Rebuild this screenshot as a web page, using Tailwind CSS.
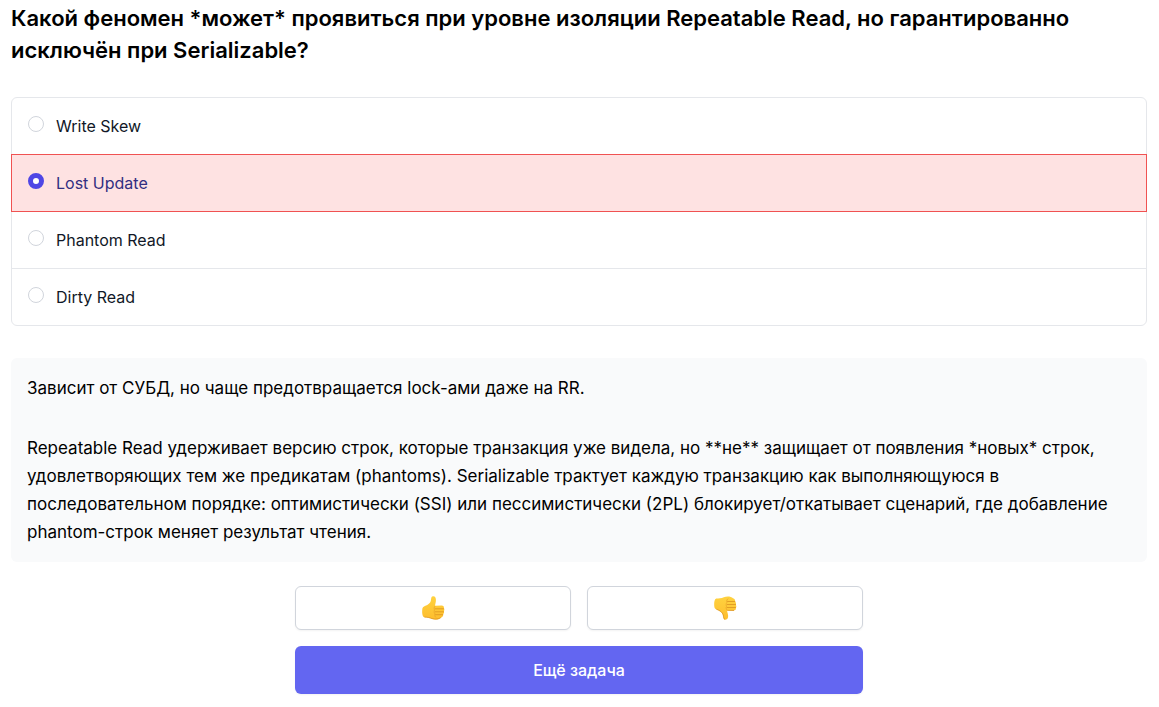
<!DOCTYPE html>
<html lang="ru">
<head>
  <meta charset="UTF-8">
  <title>Repeatable Read и Serializable</title>
  <meta name="viewport" content="width=device-width, initial-scale=1.0">
  <script src="https://cdn.jsdelivr.net/npm/@tailwindcss/browser@4"></script>
</head>
<body class="bg-white font-['Inter','Liberation_Sans',sans-serif] text-black antialiased">

  <main class="pt-0.5 pr-3 pb-3 pl-[11px]">
    <form>
      <fieldset>
        <legend class="text-[22px] leading-8 font-semibold">Какой феномен *может* проявиться при уровне изоляции Repeatable Read, но гарантированно исключён при Serializable?</legend>

        <!-- Answers -->
        <div class="mt-[31px] -space-y-px rounded-md text-base text-[#111827]">
          <label class="relative flex items-start gap-3 rounded-t-md border border-gray-200 p-4">
            <input type="radio" name="answer" value="write-skew" class="mt-0.5 size-4 shrink-0 appearance-none rounded-full border border-gray-300 bg-white checked:border-[5px] checked:border-[#4f46e5]">
            <span>Write Skew</span>
          </label>
          <label class="relative z-10 flex items-start gap-3 border border-[#f05252] bg-[#fee2e2] p-4 text-[#312e81]">
            <input type="radio" name="answer" value="lost-update" checked class="mt-0.5 size-4 shrink-0 appearance-none rounded-full border border-gray-300 bg-white checked:border-[5px] checked:border-[#4f46e5]">
            <span>Lost Update</span>
          </label>
          <label class="relative flex items-start gap-3 border border-gray-200 p-4">
            <input type="radio" name="answer" value="phantom-read" class="mt-0.5 size-4 shrink-0 appearance-none rounded-full border border-gray-300 bg-white checked:border-[5px] checked:border-[#4f46e5]">
            <span>Phantom Read</span>
          </label>
          <label class="relative flex items-start gap-3 rounded-b-md border border-gray-200 p-4">
            <input type="radio" name="answer" value="dirty-read" class="mt-0.5 size-4 shrink-0 appearance-none rounded-full border border-gray-300 bg-white checked:border-[5px] checked:border-[#4f46e5]">
            <span>Dirty Read</span>
          </label>
        </div>
      </fieldset>
    </form>

    <!-- Explanation -->
    <section class="mt-8 space-y-8 rounded-md bg-gray-50 p-4 text-[17px] leading-7">
      <p>Зависит от СУБД, но чаще предотвращается lock-ами даже на RR.</p>
      <p>Repeatable Read удерживает версию строк, которые транзакция уже видела, но **не** защищает от появления *новых* строк, удовлетворяющих тем же предикатам (phantoms). Serializable трактует каждую транзакцию как выполняющуюся в последовательном порядке: оптимистически (SSI) или пессимистически (2PL) блокирует/откатывает сценарий, где добавление phantom-строк меняет результат чтения.</p>
    </section>

    <!-- Feedback -->
    <div class="mx-auto mt-6 grid w-1/2 grid-cols-2 gap-4">
      <button type="button" aria-label="Нравится" class="flex h-11 items-center justify-center rounded-md border border-gray-300 bg-white shadow-xs">
        <svg class="size-6" viewBox="0 0 24 24" fill="none">
          <defs>
            <linearGradient id="thumb" x1="0" y1="0" x2="0" y2="1">
              <stop offset="0" stop-color="#ffd23f"/>
              <stop offset="1" stop-color="#fdbd2e"/>
            </linearGradient>
          </defs>
          <path d="M1.2 14.2C1.2 11.6 2.300 10.600 4.400 9.800C7 8.800 9.300 7.200 9.800 5C10.200 3 10 .4 11.900 .2C14.200 0 15.200 2.200 14.900 4.700C14.700 6.800 14.200 8.200 14 9.800L20.600 9.500C22.400 9.500 23.200 10.600 22.900 12C23.500 13 23.500 14.300 22.900 15.100C23.300 16.400 23 17.600 22.100 18.300C22.400 19.800 21.700 21 20 21.700C18.200 23.700 14 24 10.800 22.800C8.200 21.600 5.700 21.400 3.300 21.300C1.500 20.800 1 17.500 1.200 14.200Z" fill="url(#thumb)"/>
          <path d="M14.200 12.800H22.500M14.200 15.800H22.500M14.500 18.700H21.800" stroke="#e09a22" stroke-width=".9" stroke-linecap="round"/>
          <path d="M14 10.200C12.800 11.400 12.900 12.800 13.500 13.900C12.900 15.300 13 16.700 13.900 17.800C13.400 19.800 14 20.900 15 21.500" stroke="#eba72a" stroke-width=".8" stroke-linecap="round"/>
          <path d="M3.500 21.100C7 21.100 9 21.900 11 22.600C14 23.500 17.500 23.200 19.600 21.700" stroke="#dd9420" stroke-width=".8"/>
        </svg>
      </button>
      <button type="button" aria-label="Не нравится" class="flex h-11 items-center justify-center rounded-md border border-gray-300 bg-white shadow-xs">
        <svg class="size-6" viewBox="0 0 24 24" fill="none">
          <path d="M1.200 9.400C1.200 12 2.300 13.100 4.400 13.800C7 14.800 9.400 16.600 10 18.900C10.400 20.800 10.300 23.400 12 23.700C14.300 24 15.400 22 15.100 19.600C14.900 17.500 14.200 16 14 14.300L20.600 14.600C22.400 14.500 23.200 13.400 22.900 12C23.500 11 23.500 9.800 22.900 8.900C23.300 7.600 23 6.400 22.100 5.600C22.400 4.100 21.700 2.900 20 2.300C18.200 .4 14 .1 10.800 1.200C8.200 2.300 5.700 2.600 3.300 2.600C1.500 3.200 1 6.100 1.200 9.400Z" fill="url(#thumb)"/>
          <path d="M14.200 11.500H22.500M14.200 8.500H22.500M14.500 5.500H21.800" stroke="#e09a22" stroke-width=".9" stroke-linecap="round"/>
          <path d="M14 14C12.800 12.800 12.900 11.400 13.500 10.300C12.900 8.900 13 7.500 13.900 6.400C13.400 4.400 14 3.300 15 2.700" stroke="#eba72a" stroke-width=".8" stroke-linecap="round"/>
          <path d="M3.400 13.200C7 14.500 9.400 16.300 10.200 18.900C10.600 20.800 10.500 23 12 23.400M14.200 14.400L21 14.500" stroke="#dd9420" stroke-width=".8"/>
        </svg>
      </button>
      <button type="button" class="col-span-2 h-12 rounded-md bg-[#6366f1] text-base font-medium text-white shadow-xs">Ещё задача</button>
    </div>
  </main>

</body>
</html>
